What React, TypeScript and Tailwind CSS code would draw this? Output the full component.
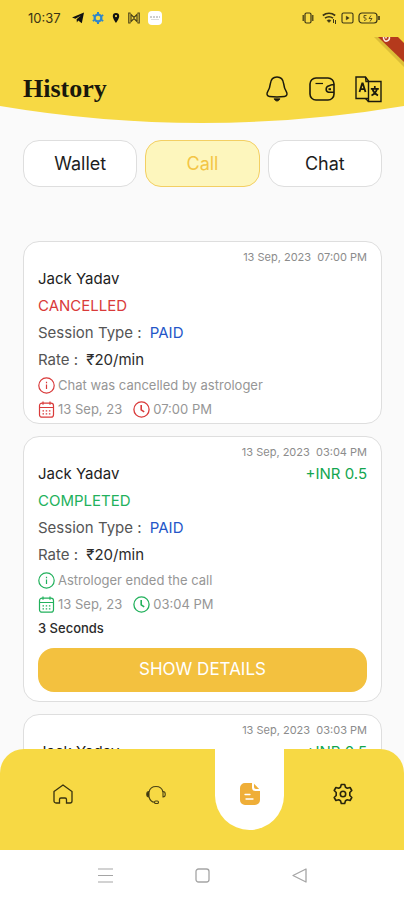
import React from 'react';
import { clsx } from 'clsx';

type Details = {
  rate: string;
  note: string;
  date: string;
  time: string;
  duration?: string;
};

type Session = {
  stamp: string;
  name: string;
  amount?: string;
  status: 'CANCELLED' | 'COMPLETED';
  details?: Details;
};

const sessions: Session[] = [
  {
    stamp: '13 Sep, 2023  07:00 PM',
    name: 'Jack Yadav',
    status: 'CANCELLED',
    details: {
      rate: '₹20/min',
      note: 'Chat was cancelled by astrologer',
      date: '13 Sep, 23',
      time: '07:00 PM',
    },
  },
  {
    stamp: '13 Sep, 2023  03:04 PM',
    name: 'Jack Yadav',
    amount: '+INR 0.5',
    status: 'COMPLETED',
    details: {
      rate: '₹20/min',
      note: 'Astrologer ended the call',
      date: '13 Sep, 23',
      time: '03:04 PM',
      duration: '3 Seconds',
    },
  },
  {
    stamp: '13 Sep, 2023  03:03 PM',
    name: 'Jack Yadav',
    amount: '+INR 0.5',
    status: 'COMPLETED',
  },
];

function StatusBar() {
  return (
    <div className="flex h-9 items-center justify-between pr-6 pl-7 text-[#3a3415]">
      <div className="flex items-center gap-3">
        <span className="text-[13px] leading-4">10:37</span>
        <svg className="-ml-px h-3 w-3" viewBox="0 0 12 12" fill="#111">
          <path d="M12 0.5 9.8 11.2 6.2 8.4 4.9 10.4 4.6 7.3 9 3.4 3.4 6.7 0 5.6Z" />
        </svg>
        <svg className="-ml-1 h-3 w-3" viewBox="0 0 12 12" fill="none" stroke="#2f86c9">
          <circle cx="6" cy="6" r="3.4" strokeWidth="2.2" />
          <path d="M6 0v2M6 10v2M.8 3l1.7 1M9.500 8l1.700 1M.8 9l1.700-1M9.500 4l1.700-1" strokeWidth="2" />
        </svg>
        <svg className="-ml-1 h-3 w-2" viewBox="0 0 8 12" fill="#111">
          <path
            fillRule="evenodd"
            d="M4 1a3.200 3.200 0 0 0-3.200 3.200C.8 6.500 4 11 4 11s3.200-4.500 3.200-6.800A3.200 3.200 0 0 0 4 1Zm0 2a1.100 1.100 0 1 1 0 2.200A1.100 1.100 0 0 1 4 3Z"
          />
        </svg>
        <svg className="-ml-1 h-3 w-3" viewBox="0 0 12 12" fill="none" stroke="#4a4218" strokeWidth="1.200">
          <path d="M2.500 1H.8v10h1.700M9.500 1h1.700v10H9.500M3 2.500v7L6 6.500l3 3v-7L6 5.500Z" />
        </svg>
        <svg className="-ml-1 h-[14px] w-[14px]" viewBox="0 0 14 14">
          <rect width="14" height="14" rx="4" fill="#fff" />
          <path d="M2 6h10" stroke="#9a9a9a" strokeDasharray="2 1" />
          <path d="M3 8.500h8" stroke="#ddd" />
        </svg>
      </div>
      <div className="flex items-center gap-2">
        <svg className="h-3 w-3" viewBox="0 0 12 12" fill="none" stroke="currentColor" strokeWidth="1.200">
          <rect x="3" y="1" width="6" height="10" rx="1.500" />
          <path d="M1.200 3v6M10.800 3v6" />
        </svg>
        <svg className="h-3 w-[15px]" viewBox="0 0 15 12" fill="none" stroke="currentColor" strokeWidth="1.600">
          <path d="M.8 3.500C4.500.6 9.500.6 13.200 3.500M3 6.200c2.500-1.800 5.500-1.800 8 0" />
          <path d="M5 8.500c1.200-.9 2.800-.9 4 0L7 10.500Z" fill="currentColor" strokeWidth=".5" />
          <path d="M11.500 7v4M13.500 8v4" strokeWidth="1" />
        </svg>
        <svg className="-ml-1 h-3 w-[13px]" viewBox="0 0 13 12" fill="none" stroke="currentColor" strokeWidth="1.100">
          <rect x="1" y="1" width="11" height="10" rx="1.500" />
          <path d="M5.200 4v4L8.300 6Z" fill="currentColor" strokeWidth=".3" />
        </svg>
        <svg className="-ml-1 h-3 w-[22px]" viewBox="0 0 22 12" fill="none" stroke="currentColor" strokeWidth="1.200">
          <rect x="1" y="1" width="18" height="10" rx="3" />
          <path d="M21 4v4" strokeWidth="1.600" />
          <path d="M8.500 3.500H6V6c3-.6 3 2.600 0 2.400M13 3.500l-2 3h3l-2 3" strokeWidth=".8" />
        </svg>
      </div>
    </div>
  );
}

function DebugRibbon() {
  return (
    <svg className="absolute top-9 right-0 h-8 w-8" viewBox="0 0 32 32" fill="none" aria-hidden="true">
      <path d="M2 1h7l23 23v7Z" fill="#8a6a10" opacity=".25" />
      <path d="M6 1h20l6 6v19Z" fill="#b53a1c" />
      <path d="M11.500 1c-.2 3.200 1.800 4.800 4 3.800 1.700-.8 2.200-2.200 1.800-3.800M14 1v1.500" stroke="#fbe9e0" strokeWidth="1.600" />
    </svg>
  );
}

function BellIcon() {
  return (
    <svg className="h-[26px] w-6" viewBox="0 0 24 26" fill="none" stroke="#1c1a0c" strokeWidth="1.500">
      <path d="M12 1c-3.900 0-6.200 2.900-6.700 6.800-.4 3.700-.8 5-2.600 7.800-1.500 2.400-.7 4.600 1.800 4.900 5 .6 10 .6 15 0 2.500-.3 3.300-2.500 1.800-4.900-1.800-2.800-2.200-4.100-2.600-7.800C18.200 3.900 15.900 1 12 1Z" />
      <path d="M9 22.800c1.500 3 4.500 3 6 0Z" fill="#1c1a0c" strokeWidth=".8" />
    </svg>
  );
}

function WalletIcon() {
  return (
    <svg className="h-6 w-[26px]" viewBox="0 0 26 24" fill="none" stroke="#1c1a0c" strokeWidth="1.600">
      <rect x="1" y="1" width="24" height="22" rx="6" />
      <path d="M25 7.800h-2c-1.500 0-2 .9-3.500 1.200a3.300 3.300 0 0 0 0 6.300H25" />
      <path d="M19.500 12.200H22" strokeWidth="2" />
      <path d="M6.500 6.500H14" strokeWidth="1.200" />
    </svg>
  );
}

function TranslateIcon() {
  return (
    <svg className="h-[27px] w-[27px]" viewBox="0 0 27 27" fill="none" stroke="#1c1a0c" strokeWidth="1.400">
      <path d="M13.500 22.500H1V1h9.500l3 4v20.500H26v-20H13.500" />
      <path d="M10.500 22.500l3 3M10.500 1l.5 4.500h2.500" />
      <path d="M4.500 16 7.200 7.500h.6L10.500 16M5.300 13.200h4.400" strokeWidth="1.800" />
      <path d="M15.800 12.800h8M19.800 10v2.500M22 13c-.7 3-2.600 5-5.500 6.500M17.600 13.500c.8 2.500 2.700 4.500 5.400 6" strokeWidth="1.700" />
    </svg>
  );
}

function InfoIcon() {
  return (
    <svg className="h-[17px] w-[17px] shrink-0" viewBox="0 0 17 17" fill="none" stroke="currentColor" strokeWidth="1.200">
      <circle cx="8.500" cy="8.500" r="7.700" />
      <path d="M8.500 7.500v4.500M8.500 4.700v1.500" />
    </svg>
  );
}

function CalendarIcon() {
  return (
    <svg className="h-[17px] w-[17px] shrink-0" viewBox="0 0 17 17" fill="none" stroke="currentColor" strokeWidth="1.200">
      <rect x="1.500" y="2.200" width="14" height="14" rx="2.500" />
      <path d="M1.500 6.500h14M5 .5v3.200M12 .5v3.200" />
      <path d="M4.500 9.800h8M4.500 12.800h8" strokeDasharray="1.500 1.700" />
    </svg>
  );
}

function ClockIcon() {
  return (
    <svg className="h-[17px] w-[17px] shrink-0" viewBox="0 0 17 17" fill="none" stroke="currentColor" strokeWidth="1.300">
      <circle cx="8.500" cy="8.500" r="7.600" />
      <path d="M8.200 4v4.800l3 2" strokeWidth="1.600" />
    </svg>
  );
}

function SessionDetails({ status, details }: { status: Session['status']; details: Details }) {
  const tone = status === 'CANCELLED' ? 'text-[#d93a3a]' : 'text-[#22b15c]';
  return (
    <>
      <p className={clsx('text-[15px] leading-[27px]', tone)}>{status}</p>
      <p className="text-[15px] leading-[27px] text-[#555]">
        Session Type : <span className="ml-1 text-[#2456c8]">PAID</span>
      </p>
      <p className="text-[15px] leading-[27px] text-[#555]">
        Rate : <span className="ml-1 text-[#2b2b2b]">{details.rate}</span>
      </p>
      <div className={clsx('flex h-6 items-center gap-[3px]', tone)}>
        <InfoIcon />
        <span className="text-[13px] leading-6 text-[#969696]">{details.note}</span>
      </div>
      <div className={clsx('flex h-6 items-center gap-[3px]', tone)}>
        <CalendarIcon />
        <span className="mr-2 text-[13px] leading-6 text-[#969696]">{details.date}</span>
        <ClockIcon />
        <span className="text-[13px] leading-6 text-[#969696]">{details.time}</span>
      </div>
      {details.duration && (
        <>
          <p className="text-[13px] leading-6 font-medium text-[#2b2b2b]">{details.duration}</p>
          <button type="button" className="mt-2 mb-[7px] h-11 w-full rounded-2xl bg-[#f3c13f] text-[17px] text-white">
            SHOW DETAILS
          </button>
        </>
      )}
    </>
  );
}

function SessionCard({ session }: { session: Session }) {
  return (
    <article className="shrink-0 rounded-2xl border border-[#dedede] bg-white px-[14px] pt-2 pb-[2px]">
      <p className="text-right text-[11px] leading-[15px] whitespace-pre text-[#8c8c8c]">{session.stamp}</p>
      <div className="flex justify-between text-[15px] leading-[27px]">
        <h2 className="text-[#1d1d1d]">{session.name}</h2>
        {session.amount && <span className="text-[#12a650]">{session.amount}</span>}
      </div>
      {session.details && <SessionDetails status={session.status} details={session.details} />}
    </article>
  );
}

const tabs = ['Wallet', 'Call', 'Chat'];

function BottomNav() {
  return (
    <nav className="relative -mt-6 grid h-[101px] shrink-0 grid-cols-4 rounded-t-3xl bg-[#f7d944] pr-[14px] pl-4">
      <a href="#home" aria-label="Home" className="flex h-[90px] items-center justify-center">
        <svg className="h-5 w-5" viewBox="0 0 20 20" fill="none" stroke="#38320f" strokeWidth="1.300">
          <path d="M1 7.500 10 1l9 6.500V17a2 2 0 0 1-2 2h-3.500v-3.500A1.500 1.500 0 0 0 12 14H8a1.500 1.500 0 0 0-1.500 1.500V19H3a2 2 0 0 1-2-2Z" />
        </svg>
      </a>
      <a href="#support" aria-label="Support" className="flex h-[90px] items-center justify-center">
        <svg className="h-5 w-5" viewBox="0 0 20 20" fill="none" stroke="#4a4214" strokeWidth="1.100">
          <path d="M3 8a7.200 7.200 0 0 1 14 0M3 13c1 3.500 3 5 5.500 5.300" />
          <path d="M3 7.500v5.500c-3 0-3-5.500 0-5.500Z" fill="#38320f" />
          <path d="M17 7.500v5.500c3 0 3-5.500 0-5.500Z" />
          <rect x="8.500" y="17" width="4" height="2.500" rx="1.200" />
        </svg>
      </a>
      <a href="#history" aria-label="History" aria-current="page" className="mx-auto flex h-[81px] w-[69px] items-center justify-center rounded-b-[35px] bg-white pt-[9px]">
        <svg className="h-[22px] w-5" viewBox="0 0 20 22">
          <path d="M5 0h7v4.500A3.500 3.500 0 0 0 15.500 8H20v9a5 5 0 0 1-5 5H5a5 5 0 0 1-5-5V5a5 5 0 0 1 5-5Z" fill="#efae38" />
          <path d="M14 .8 19.200 6H16a2 2 0 0 1-2-2Z" fill="#efae38" />
          <path d="M5 11.500h5M6 16h7" stroke="#fff" strokeWidth="1.300" strokeLinecap="round" />
        </svg>
      </a>
      <a href="#settings" aria-label="Settings" className="flex h-[90px] items-center justify-center">
        <svg className="h-[22px] w-[22px]" viewBox="0 0 22 22" fill="none" stroke="#2a250c" strokeWidth="1.600" strokeLinejoin="round">
          <path d="M9.300 1.500h3.400l.8 2.700 1.800 1 2.800-.7 1.700 3-2 2v3l2 2-1.700 3-2.800-.7-1.800 1-.8 2.700H9.300l-.8-2.700-1.800-1-2.800.7-1.700-3 2-2v-3l-2-2 1.700-3 2.800.7 1.800-1Z" />
          <circle cx="11" cy="11" r="2.700" />
        </svg>
      </a>
    </nav>
  );
}

function SystemNav() {
  return (
    <div className="flex h-[50px] shrink-0 items-center justify-center gap-[82px] bg-white text-[#a5a5a5]">
      <button type="button" aria-label="Recent apps">
        <svg className="block h-[15px] w-[15px]" viewBox="0 0 15 15" fill="none" stroke="currentColor" strokeWidth="1.200">
          <path d="M0 1h15M0 7.500h15M0 14h15" />
        </svg>
      </button>
      <button type="button" aria-label="System home">
        <svg className="block h-[15px] w-[15px]" viewBox="0 0 15 15" fill="none" stroke="currentColor" strokeWidth="1.300">
          <rect x="1" y="1" width="13" height="13" rx="2.500" />
        </svg>
      </button>
      <button type="button" aria-label="Back">
        <svg className="block h-[15px] w-[15px]" viewBox="0 0 15 15" fill="none" stroke="currentColor" strokeWidth="1.300" strokeLinejoin="round">
          <path d="M1 7.500 14 1v13Z" />
        </svg>
      </button>
    </div>
  );
}

export default function App() {
  return (
    <div className="relative flex h-screen flex-col overflow-hidden bg-[#fafafa] font-['Inter','Noto_Sans',sans-serif]">
      <header className="shrink-0">
        <div className="h-[106px] bg-[#f7d944]">
          <StatusBar />
          <div className="flex items-center justify-between pt-[37px] pr-[22px] pl-[23px]">
            <h1 className="font-['Liberation_Serif',serif] text-[26px] leading-8 font-bold text-[#1a180c]">History</h1>
            <div className="flex items-center gap-5">
              <button type="button" aria-label="Notifications"><BellIcon /></button>
              <button type="button" aria-label="Wallet"><WalletIcon /></button>
              <button type="button" aria-label="Language"><TranslateIcon /></button>
            </div>
          </div>
        </div>
        <svg className="block h-[17px] w-full" viewBox="0 0 404 17" preserveAspectRatio="none" fill="#f7d944" aria-hidden="true">
          <path d="M0 0Q202 34 404 0Z" />
        </svg>
        <DebugRibbon />
      </header>

      <main className="flex min-h-0 flex-1 flex-col overflow-hidden pt-[17px] pr-[22px] pl-[23px]">
        <div className="grid shrink-0 grid-cols-3 gap-2">
          {tabs.map((tab) => (
            <button
              key={tab}
              type="button"
              aria-pressed={tab === 'Call'}
              className={clsx(
                'h-[47px] rounded-2xl border text-lg',
                tab === 'Call' ? 'border-[#f3cf63] bg-[#fdf6bd] text-[#f3c545]' : 'border-[#dedede] bg-white text-[#1d1d1d]',
              )}
            >
              {tab}
            </button>
          ))}
        </div>
        <section className="mt-[54px] flex flex-col gap-3">
          {sessions.map((session) => (
            <SessionCard key={session.stamp} session={session} />
          ))}
        </section>
      </main>

      <BottomNav />
      <SystemNav />
    </div>
  );
}
